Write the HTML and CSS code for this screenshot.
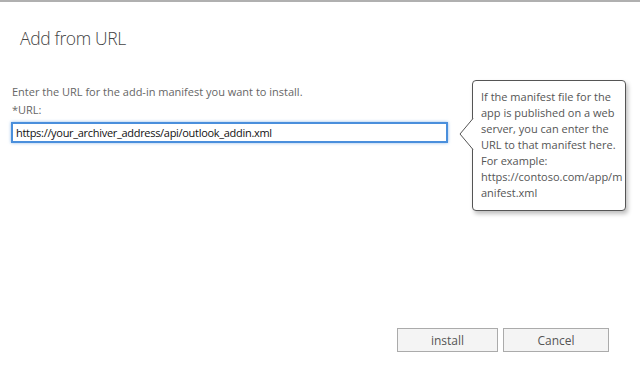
FILE: index.html
```html
<!DOCTYPE html>
<html lang="en">
<head>
    <meta charset="UTF-8">
    <meta name="viewport" content="width=device-width, initial-scale=1.0">
    <title>Add from URL</title>
    <link rel="stylesheet" href="styles.css">
</head>
<body>
    <div class="dialog">
        <div class="dialog-head">
            <h1 class="dialog-title">Add from URL</h1>
        </div>
        <div class="dialog-body">
            <div class="url-form">
                <p class="hint">Enter the URL for the add-in manifest you want to install.</p>
                <label class="field-label" for="url">*URL:</label>
                <input id="url" class="url-input" type="text" value="https://your_archiver_address/api/outlook_addin.xml">
            </div>
            <div class="callout">
                <svg class="callout-arrow" width="15" height="32" viewBox="0 0 15 32">
                    <polyline points="14,0.5 1,16 14,31.5" fill="#fff" stroke="#555" stroke-width="1"/>
                </svg>
                <p>If the manifest file for the app is published on a web server, you can enter the URL to that manifest here. For example: <span class="callout-url">https://contoso.com/app/manifest.xml</span></p>
            </div>
        </div>
        <div class="dialog-foot">
            <button class="button install" type="button">install</button>
            <button class="button cancel" type="button">Cancel</button>
        </div>
    </div>
</body>
</html>
```

FILE: styles.css
```css
/* ---------- add from url dialog ---------- */

* {
    box-sizing: border-box;
}

html,
body {
    margin: 0;
    height: 100%;
    background: #fff;
}

body {
    font-family: "Open Sans", "Noto Sans", sans-serif;
    color: #666;
}

.dialog {
    height: 383px;
    border-top: 2px solid #b0b0b0;
    display: flex;
    flex-direction: column;
}

.dialog-head {
    padding: 24px 20px 0;
}

.dialog-title {
    margin: 0;
    font-size: 17.5px;
    font-weight: 300;
    letter-spacing: -0.35px;
    color: #444;
    line-height: 24px;
}

.dialog-body {
    display: flex;
    align-items: flex-start;
    padding: 30px 0 0 12px;
}

.url-form {
    width: 437px;
    padding-top: 4px;
}

.hint {
    margin: 0;
    font-size: 11px;
    line-height: 16px;
}

.field-label {
    display: block;
    margin-top: 2px;
    font-size: 11px;
    line-height: 16px;
}

.url-input {
    display: block;
    width: 437px;
    height: 21px;
    margin: 4px 0 0 -1px;
    padding: 0 3px;
    border: 2px solid #4a8fdc;
    box-shadow: 0 0 3px rgba(74, 143, 220, 0.6);
    font-family: inherit;
    font-size: 11px;
    letter-spacing: -0.3px;
    color: #111;
    outline: none;
}

.callout {
    position: relative;
    width: 154px;
    margin-left: 23px;
    padding: 8px 2px 9px 8px;
    border: 1px solid #555;
    border-radius: 4px;
    box-shadow: 2px 3px 4px rgba(0, 0, 0, 0.25);
    background: #fff;
}

.callout p {
    margin: 0;
    font-size: 11px;
    line-height: 16px;
    color: #555;
}

.callout-url {
    display: block;
    word-break: break-all;
}

.callout-arrow {
    position: absolute;
    left: -14px;
    top: 37px;
}

.dialog-foot {
    margin-top: auto;
    display: flex;
    justify-content: flex-end;
    gap: 5px;
    padding: 0 31px 31px 0;
}

.button {
    height: 24px;
    border: 1px solid #ababab;
    background: #f4f4f4;
    font-family: inherit;
    font-size: 12px;
    color: #555;
}

.install {
    width: 101px;
}

.cancel {
    width: 106px;
}
```
